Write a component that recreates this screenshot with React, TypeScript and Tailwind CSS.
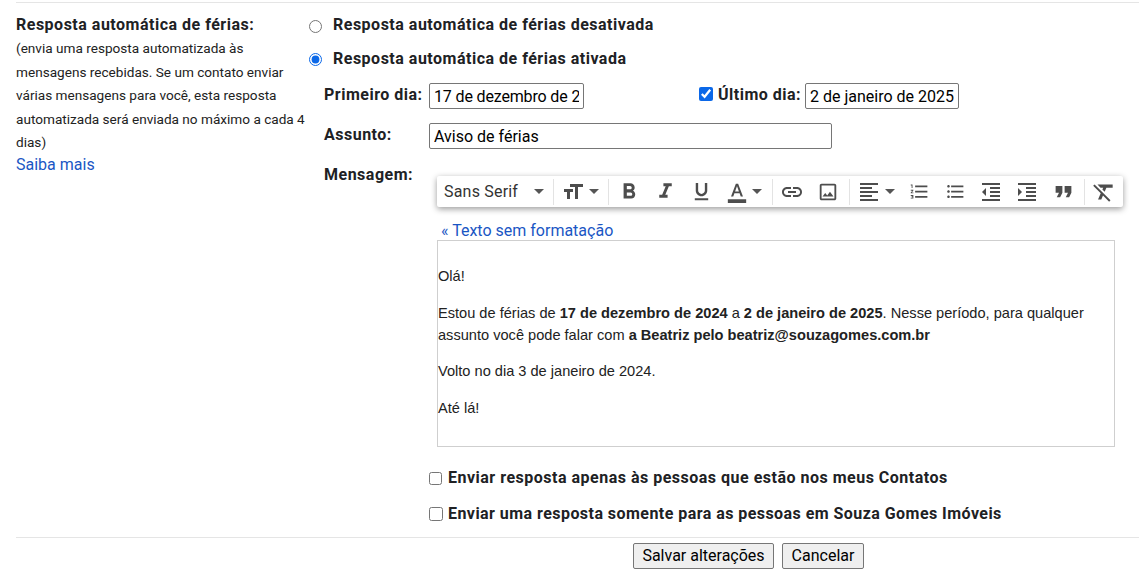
import React from "react";
import {
  MdFormatBold, MdFormatItalic, MdFormatUnderlined, MdInsertLink, MdOutlineImage, MdFormatAlignLeft,
  MdFormatListNumbered, MdFormatListBulleted, MdFormatIndentDecrease, MdFormatIndentIncrease,
  MdFormatQuote, MdFormatClear, MdFormatSize, MdFormatColorText,
} from "react-icons/md";

const Caret = () => (
  <svg width="10" height="5" viewBox="0 0 10 5" className="text-[#555] shrink-0"><path d="M0 0h10L5 5z" fill="currentColor" /></svg>
);
const Sep = () => <div className="w-px h-[26px] bg-[#e3e3e3] shrink-0" />;
const Btn = ({ children }: { children: React.ReactNode }) => (
  <div className="w-9 h-full flex items-center justify-center text-[#4d4d4d] shrink-0">{children}</div>
);
const Menu = ({ children, w }: { children: React.ReactNode; w: string }) => (
  <div className={`${w} h-full flex items-center pl-[7px] gap-1 text-[#4d4d4d] shrink-0`}>{children}</div>
);

export default function App() {
  const label = "font-['Roboto',sans-serif] font-bold text-[16px] tracking-[0.5px] text-[#202124] leading-5 whitespace-nowrap";
  const input = "border border-[#767676] rounded-[2px] h-[26px] px-1 text-[16px] text-black font-['Roboto',sans-serif] outline-none";
  return (
    <div className="w-[1139px] h-[583px] bg-white overflow-hidden pl-[16px] pt-[2px] font-['Roboto',sans-serif] text-[#202124]">
      <div className="border-t border-[#e5e5e5] flex h-[535px]">
        <div className="w-[293px] shrink-0 pt-[12px]">
          <div className={label}>Resposta automática de férias:</div>
          <p className="text-[13.6px] leading-[23.6px] mt-[2px] w-[292px] text-[#222]">
            (envia uma resposta automatizada às mensagens recebidas. Se um contato enviar várias mensagens para você, esta resposta automatizada será enviada no máximo a cada 4 dias)
          </p>
          <a className="block text-[16px] leading-5 text-[#1a56c4]">Saiba mais</a>
        </div>
        <div className="flex-1 flex flex-col">
          <label className="flex items-center h-5 mt-[12px]">
            <input type="radio" name="v" className="m-0 mt-[2px] w-[13px] h-[13px]" />
            <span className={`${label} ml-[11px]`}>Resposta automática de férias desativada</span>
          </label>
          <label className="flex items-center h-5 mt-[14px]">
            <input type="radio" name="v" defaultChecked className="m-0 w-[13px] h-[13px] accent-[#0b68e8]" />
            <span className={`${label} ml-[11px]`}>Resposta automática de férias ativada</span>
          </label>
          <div className="flex mt-[14px] ml-[15px] h-[26px]">
            <span className={`${label} w-[105px] shrink-0 mt-[2px]`}>Primeiro dia:</span>
            <input className={`${input} w-[155px] tracking-[-0.15px]`} defaultValue="17 de dezembro de 2" />
            <input type="checkbox" defaultChecked className="m-0 ml-[115px] mt-[4px] w-[14px] h-[14px] accent-[#0b68e8]" />
            <span className={`${label} ml-[5px] w-[87px] shrink-0 mt-[2px]`}>Último dia:</span>
            <input className={`${input} w-[154px]`} defaultValue="2 de janeiro de 2025" />
          </div>
          <div className="flex mt-[14px] ml-[15px] h-[26px]">
            <span className={`${label} w-[105px] shrink-0 mt-[2px]`}>Assunto:</span>
            <input className={`${input} w-[403px]`} defaultValue="Aviso de férias" />
          </div>
          <div className="flex mt-[15px] ml-[15px]">
            <span className={`${label} w-[113px] shrink-0 mt-px`}>Mensagem:</span>
            <div className="w-[686px] mt-[12px]">
              <div className="h-[31px] bg-white rounded-[2px] shadow-[0_2px_6px_rgba(0,0,0,0.4)] flex items-center">
                <Menu w="w-[116px]">
                  <span className="text-[16px] tracking-[0.2px] text-[#333] w-[86px] whitespace-nowrap">Sans Serif</span>
                  <Caret />
                </Menu>
                <Sep />
                <Menu w="w-[54px]"><MdFormatSize size={24} className="shrink-0" /><Caret /></Menu>
                <Sep />
                <div className="w-[2px] shrink-0" />
                <Btn><MdFormatBold size={26} /></Btn>
                <Btn><MdFormatItalic size={25} /></Btn>
                <Btn><MdFormatUnderlined size={23} /></Btn>
                <Menu w="w-[53px]"><MdFormatColorText size={22} className="shrink-0" /><Caret /></Menu>
                <Sep />
                <div className="w-px shrink-0" />
                <Btn><MdInsertLink size={24} /></Btn>
                <Btn><MdOutlineImage size={22} /></Btn>
                <div className="w-[3px] shrink-0" />
                <Sep />
                <Menu w="w-[51px]"><MdFormatAlignLeft size={24} className="shrink-0" /><Caret /></Menu>
                <Btn><MdFormatListNumbered size={21} /></Btn>
                <Btn><MdFormatListBulleted size={21} /></Btn>
                <Btn><MdFormatIndentDecrease size={24} /></Btn>
                <Btn><MdFormatIndentIncrease size={24} /></Btn>
                <Btn><MdFormatQuote size={27} /></Btn>
                <div className="w-[3px] shrink-0" />
                <Sep />
                <div className="w-[38px] h-full flex items-center justify-center text-[#4d4d4d]"><MdFormatClear size={26} /></div>
              </div>
              <a className="block text-[16px] leading-4 text-[#1a56c4] mt-[16px] ml-[4px] mb-px whitespace-nowrap">« Texto sem formatação</a>
              <div className="w-[678px] h-[207px] border border-[#cfcfcf] font-['Liberation_Sans',sans-serif] text-[14.6px] leading-[22px] text-[#222] pt-[24px]">
                <p>Olá!</p>
                <p className="mt-[15px]">Estou de férias de <b>17 de dezembro de 2024</b> a <b>2 de janeiro de 2025</b>. Nesse período, para qualquer assunto você pode falar com <b>a Beatriz pelo beatriz@souzagomes.com.br</b></p>
                <p className="mt-[14px]">Volto no dia 3 de janeiro de 2024.</p>
                <p className="mt-[15px]">Até lá!</p>
              </div>
            </div>
          </div>
          <label className="flex items-center mt-[21px] ml-[120px] h-5">
            <input type="checkbox" className="m-0 w-[13px] h-[13px]" />
            <span className={`${label} ml-[6px]`}>Enviar resposta apenas às pessoas que estão nos meus Contatos</span>
          </label>
          <label className="flex items-center mt-[16px] ml-[120px] h-5">
            <input type="checkbox" className="m-0 w-[14px] h-[14px]" />
            <span className={`${label} ml-[5px] tracking-[0.45px]`}>Enviar uma resposta somente para as pessoas em Souza Gomes Imóveis</span>
          </label>
        </div>
      </div>
      <div className="border-t border-[#e5e5e5] flex gap-2 pt-[5px] pl-[617px]">
        <button className="w-[141px] h-[26px] border border-[#767676] rounded-[2px] bg-[#efefef] text-[16px] text-black">Salvar alterações</button>
        <button className="w-[82px] h-[26px] border border-[#767676] rounded-[2px] bg-[#efefef] text-[16px] text-black">Cancelar</button>
      </div>
    </div>
  );
}
